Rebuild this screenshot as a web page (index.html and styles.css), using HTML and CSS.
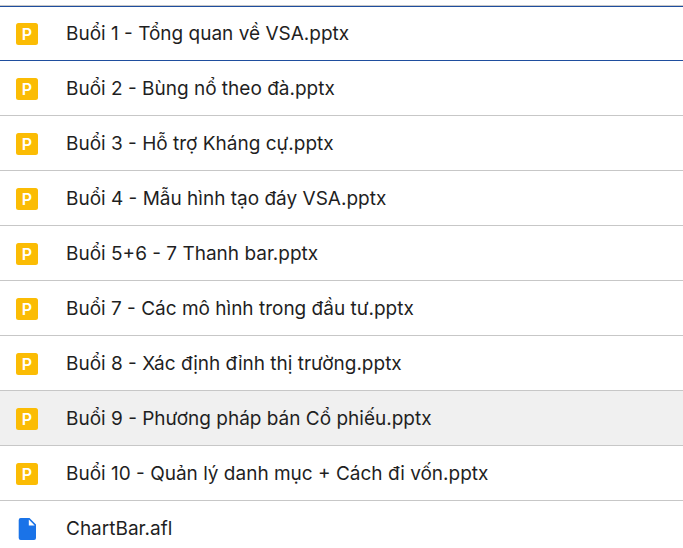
FILE: index.html
```html
<!DOCTYPE html>
<html lang="vi">
<head>
    <meta charset="UTF-8">
    <title>VSA</title>
    <link rel="stylesheet" href="styles.css">
</head>
<body>
    <svg class="sprite" aria-hidden="true">
        <symbol id="pptx" viewBox="0 0 22 22">
            <rect width="22" height="22" rx="2.5" fill="#fbbc04"/>
            <text class="letter" x="11" y="16.5" text-anchor="middle">P</text>
        </symbol>
        <symbol id="file" viewBox="0 0 22 22">
            <path d="M4.700 0H13.500l6.500 6.500V20a2 2 0 0 1-2 2H4.700a2 2 0 0 1-2-2V2a2 2 0 0 1 2-2z" fill="#1a73e8"/>
            <path d="M12.800 1.600V7.500h5.900z" fill="#fff"/>
        </symbol>
    </svg>
    <ul class="file-list">
        <li class="file focused"><svg class="icon"><use href="#pptx"/></svg><span class="name">Buổi 1 - Tổng quan về VSA.pptx</span></li>
        <li class="file"><svg class="icon"><use href="#pptx"/></svg><span class="name">Buổi 2 - Bùng nổ theo đà.pptx</span></li>
        <li class="file"><svg class="icon"><use href="#pptx"/></svg><span class="name">Buổi 3 - Hỗ trợ Kháng cự.pptx</span></li>
        <li class="file"><svg class="icon"><use href="#pptx"/></svg><span class="name">Buổi 4 - Mẫu hình tạo đáy VSA.pptx</span></li>
        <li class="file"><svg class="icon"><use href="#pptx"/></svg><span class="name">Buổi 5+6 - 7 Thanh bar.pptx</span></li>
        <li class="file"><svg class="icon"><use href="#pptx"/></svg><span class="name">Buổi 7 - Các mô hình trong đầu tư.pptx</span></li>
        <li class="file"><svg class="icon"><use href="#pptx"/></svg><span class="name">Buổi 8 - Xác định đỉnh thị trường.pptx</span></li>
        <li class="file hovered"><svg class="icon"><use href="#pptx"/></svg><span class="name">Buổi 9 - Phương pháp bán Cổ phiếu.pptx</span></li>
        <li class="file"><svg class="icon"><use href="#pptx"/></svg><span class="name">Buổi 10 - Quản lý danh mục + Cách đi vốn.pptx</span></li>
        <li class="file"><svg class="icon"><use href="#file"/></svg><span class="name">ChartBar.afl</span></li>
    </ul>
</body>
</html>
```
FILE: styles.css
```css
body {
    font-family: Inter, Roboto, sans-serif;
    background-color: #ffffff;
    color: #1f1f1f;
    margin: 0;
    overflow: hidden;
}

.sprite {
    display: none;
}

.file-list {
    list-style: none;
    margin: 5px 0 0;
    padding: 0;
    border-top: 1px solid #c7c7c7;
}

.file {
    display: flex;
    align-items: center;
    gap: 28px;
    height: 55px;
    padding: 2px 16px 0;
    box-sizing: border-box;
    border-bottom: 1px solid #c7c7c7;
}

.focused {
    border-bottom-color: #1f4e9e;
    box-shadow: inset 0 1px #1f4e9e;
}

.hovered {
    background-color: #f0f0f0;
}

.icon {
    width: 22px;
    height: 22px;
    flex-shrink: 0;
}

.letter {
    font-size: 16px;
    font-weight: 600;
    fill: #ffffff;
}

.name {
    font-size: 19px;
    line-height: 28px;
    white-space: nowrap;
}
```
